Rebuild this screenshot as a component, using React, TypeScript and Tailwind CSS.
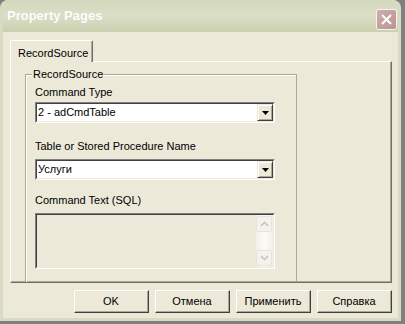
import React from "react";

const font = { fontFamily: '"Liberation Sans", Arial, sans-serif' };

const DropButton = () => (
  <div className="flex h-[17px] w-[16px] items-center justify-center border-t border-l border-t-[#ece9d8] border-l-[#ece9d8] border-r border-b border-r-[#404040] border-b-[#404040] bg-[#ece9d8] shadow-[inset_1px_1px_0_#ffffff,inset_-1px_-1px_0_#aca899]">
    <svg width="7" height="4" viewBox="0 0 7 4">
      <path d="M0 0h7L3.5 4z" fill="#000" />
    </svg>
  </div>
);

const Combo = ({ value }: { value: string }) => (
  <div className="flex h-[21px] w-[240px] border-t border-l border-t-[#808080] border-l-[#808080] border-r border-b border-r-white border-b-white">
    <div className="flex flex-1 items-center justify-between border-t border-l border-t-[#404040] border-l-[#404040] border-r border-b border-r-[#ece9d8] border-b-[#ece9d8] bg-white pl-[1px] pr-[0px]">
      <span className="text-[11px] leading-[13px] text-black">{value}</span>
      <DropButton />
    </div>
  </div>
);

const Arrow = ({ up }: { up?: boolean }) => (
  <div className="flex h-[16px] w-[16px] items-center justify-center rounded-[2px] border border-[#e6e4da] bg-[#f3f2ec]">
    <svg width="9" height="6" viewBox="0 0 9 6">
      <path
        d={up ? "M1 5l3.5-3.5L8 5" : "M1 1l3.5 3.5L8 1"}
        stroke="#c9c7ba"
        strokeWidth="1.6"
        fill="none"
      />
    </svg>
  </div>
);

const Btn = ({ label }: { label: string }) => (
  <div className="flex h-[23px] w-[75px] border-t border-l border-t-white border-l-white border-r border-b border-r-[#404040] border-b-[#404040]">
    <div className="flex flex-1 items-center justify-center border-r border-b border-r-[#aca899] border-b-[#aca899] bg-[#ece9d8] text-[11px] text-black">
      {label}
    </div>
  </div>
);

export default function App() {
  return (
    <div className="h-[324px] w-[405px] bg-[#808080] overflow-hidden" style={font}>
      <div className="flex h-[321px] w-[401px] flex-col overflow-hidden rounded-t-[8px] border-x-[3px] border-b-[3px] border-x-[#d8dbc3] border-b-[#d8dbc3] bg-[#ece9d8]">
        {/* title bar */}
        <div className="-mx-[3px] flex h-[32px] items-center justify-between bg-gradient-to-b from-[#d4d8bc] via-[#dcdfc8] to-[#cbcfae] pl-[7px] pr-[4px]">
          <span className="text-[13px] font-bold text-white [text-shadow:0_0_1px_#c8cbb0]">
            Property Pages
          </span>
          <div className="mt-[7px] flex h-[21px] w-[21px] items-center justify-center rounded-[3px] border border-[#f4f4ee] bg-gradient-to-br from-[#cfaeae] to-[#b99393]">
            <svg width="11" height="11" viewBox="0 0 11 11">
              <path d="M1 1l9 9M10 1l-9 9" stroke="#fff" strokeWidth="2" />
            </svg>
          </div>
        </div>

        {/* body */}
        <div className="flex flex-1 flex-col pl-[7px] pr-[6px] pt-[8px]">
          <div className="flex">
            <div className="relative z-10 -mb-[1px] flex h-[22px] w-[83px] items-start rounded-t-[2px] border-t border-l border-t-white border-l-white border-r border-r-[#716f64] bg-[#ece9d8] pl-[7px] pt-[4px] text-[11px] text-black shadow-[inset_-1px_0_0_#aca899]">
              RecordSource
            </div>
          </div>
          <div className="h-[222px] overflow-hidden border-t border-l border-t-white border-l-white border-r border-b border-r-[#716f64] border-b-[#716f64] pl-[14px] pt-[12px] shadow-[inset_-1px_-1px_0_#aca899]">
            <div className="relative h-[240px] w-[272px] border border-[#aca899] pl-[9px] pt-[11px] shadow-[inset_1px_1px_0_#ffffff]">
              <span className="absolute -top-[7px] left-[6px] bg-[#ece9d8] px-[1px] text-[11px] leading-[13px] text-black">
                RecordSource
              </span>
              <div className="text-[11px] leading-[13px] text-black">Command Type</div>
              <div className="mt-[3px]">
                <Combo value="2 - adCmdTable" />
              </div>
              <div className="mt-[17px] text-[11px] leading-[13px] text-black">
                Table or Stored Procedure Name
              </div>
              <div className="mt-[6px]">
                <Combo value="Услуги" />
              </div>
              <div className="mt-[14px] text-[11px] leading-[13px] text-black">
                Command Text (SQL)
              </div>
              <div className="mt-[6px] flex h-[56px] w-[240px] border-t border-l border-t-[#808080] border-l-[#808080] border-r border-b border-r-white border-b-white">
                <div className="flex flex-1 justify-end border-t border-l border-t-[#404040] border-l-[#404040] border-r border-b border-r-[#ece9d8] border-b-[#ece9d8] bg-[#ece9d8]">
                  <div className="flex w-[17px] flex-col justify-between bg-gradient-to-r from-[#f0efe8] via-[#fbfbf8] to-[#f0efe8] py-[1px]">
                    <Arrow up />
                    <Arrow />
                  </div>
                </div>
              </div>
            </div>
          </div>

          <div className="mt-[7px] flex justify-end gap-[6px]">
            <Btn label="OK" />
            <Btn label="Отмена" />
            <Btn label="Применить" />
            <Btn label="Справка" />
          </div>
        </div>
      </div>
    </div>
  );
}
